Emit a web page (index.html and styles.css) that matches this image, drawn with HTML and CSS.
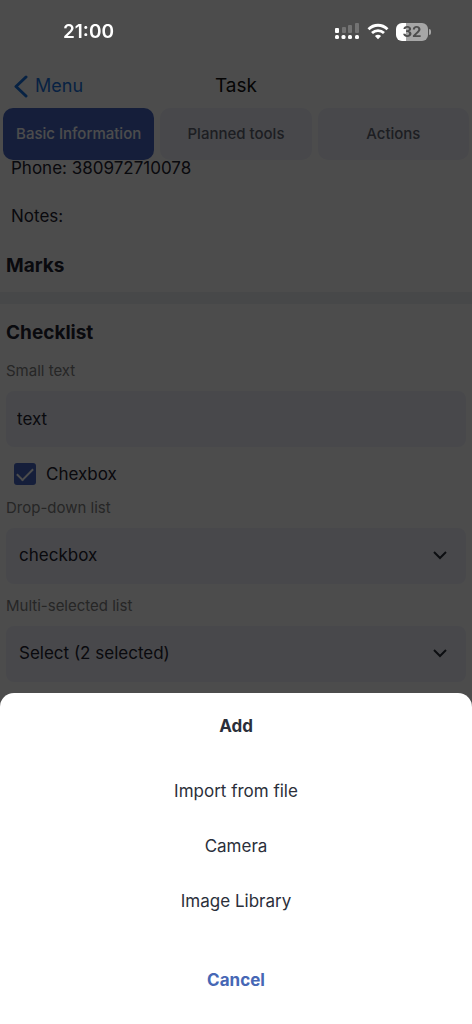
FILE: index.html
```html
<!DOCTYPE html>
<html lang="en">
<head>
<meta charset="UTF-8">
<meta name="viewport" content="width=device-width, initial-scale=1">
<title>Task</title>
<link rel="stylesheet" href="styles.css">
</head>
<body>

<!-- Status bar -->
<div class="status-bar">
  <span class="time">21:00</span>
  <div class="status-icons">
    <svg width="26" height="18" viewBox="0 0 26 18" fill="#fff">
      <rect x="1" y="5" width="4" height="5" rx="1"/>
      <g opacity=".22">
        <rect x="8" y="4" width="4" height="6" rx="1"/>
        <rect x="14" y="2" width="4" height="8" rx="1"/>
        <rect x="21" y="0" width="4" height="10" rx="1"/>
      </g>
      <rect x="1" y="12" width="4" height="4" rx="1.5"/>
      <rect x="7.5" y="12" width="4" height="4" rx="1.5"/>
      <rect x="14" y="12" width="4" height="4" rx="1.5"/>
      <rect x="21" y="12" width="4" height="4" rx="1.5"/>
    </svg>
    <svg width="22" height="18" viewBox="0 0 22 18" fill="none" stroke="#fff" stroke-width="2.8">
      <path d="M1.500 6.200C7 .9 15 .9 20.500 6.200"/>
      <path d="M5 10C8.500 6.700 13.500 6.700 17 10"/>
      <path d="M11 16.200L7.900 13.100C9.700 11.400 12.300 11.400 14.100 13.100Z" fill="#fff" stroke="none"/>
    </svg>
    <div class="battery"><span class="battery-level">32</span></div>
  </div>
</div>

<header class="nav-bar">
  <a class="back" href="#">
    <svg width="14" height="24" viewBox="0 0 14 24" fill="none" stroke="currentColor" stroke-width="3" stroke-linecap="round" stroke-linejoin="round"><path d="M12 3L2 12.500L12 22"/></svg>
    Menu
  </a>
  <h1>Task</h1>
</header>

<nav class="tabs">
  <button class="tab active">Basic Information</button>
  <button class="tab">Planned tools</button>
  <button class="tab">Actions</button>
</nav>

<main>
  <section class="details">
    <p>Phone: 380972710078</p>
    <p>Notes:</p>
    <h2>Marks</h2>
  </section>

  <section class="checklist">
    <h2>Checklist</h2>
    <label class="label" for="small-text">Small text</label>
    <input class="field" type="text" id="small-text" value="text">

    <label class="check-row">
      <input type="checkbox" checked>
      Chexbox
    </label>

    <label class="label" for="dropdown">Drop-down list</label>
    <div class="select-wrap">
      <select class="field" id="dropdown"><option>checkbox</option></select>
      <svg class="chevron" width="14" height="10" viewBox="0 0 14 10" fill="none" stroke="#2b2f3a" stroke-width="2"><path d="M1 2L7 8L13 2"/></svg>
    </div>

    <label class="label" for="multi">Multi-selected list</label>
    <div class="select-wrap">
      <select class="field" id="multi"><option>Select (2 selected)</option></select>
      <svg class="chevron" width="14" height="10" viewBox="0 0 14 10" fill="none" stroke="#2b2f3a" stroke-width="2"><path d="M1 2L7 8L13 2"/></svg>
    </div>
  </section>
</main>

<div class="overlay"></div>

<!-- Action sheet -->
<div class="sheet" role="dialog" aria-labelledby="sheet-title">
  <h3 id="sheet-title">Add</h3>
  <div class="sheet-options">
    <button>Import from file</button>
    <button>Camera</button>
    <button>Image Library</button>
  </div>
  <button class="cancel">Cancel</button>
</div>

</body>
</html>
```
FILE: styles.css
```css
* {
  box-sizing: border-box;
}
body {
  margin: 0;
  min-height: 100vh;
  background: #fff;
  color: #1f2330;
  font-family: Inter, "Liberation Sans", sans-serif;
  font-size: 17px;
  line-height: 24px;
  overflow: hidden;
}
h1, h2, h3, p {
  margin: 0;
}
button, input, select {
  font: inherit;
  color: inherit;
  border: none;
}

/* Status bar stays bright above the overlay */
.status-bar {
  position: relative;
  z-index: 3;
  display: flex;
  justify-content: space-between;
  align-items: center;
  height: 64px;
  padding: 0 44px 0 63px;
  color: #fff;
}
.time {
  font-size: 19px;
  font-weight: 600;
}
.status-icons {
  display: flex;
  align-items: center;
  gap: 7px;
}
.battery {
  position: relative;
  width: 32px;
  height: 18px;
  border-radius: 6px;
  background: linear-gradient(to right, #fff 32%, #a6a6a6 32%);
  color: #4d4d4d;
  font-size: 15px;
  font-weight: 700;
  line-height: 18px;
  text-align: center;
}
.battery::after {
  content: "";
  position: absolute;
  left: 33px;
  top: 6px;
  width: 2px;
  height: 6px;
  border-radius: 0 2px 2px 0;
  background: #a6a6a6;
}

.nav-bar {
  display: grid;
  grid-template-columns: 1fr auto 1fr;
  align-items: center;
  height: 44px;
  padding: 0 14px;
}
.nav-bar h1 {
  font-size: 19px;
  font-weight: 400;
  color: #111;
}
.back {
  display: flex;
  align-items: center;
  gap: 7px;
  color: #1a73e0;
  font-size: 18px;
  text-decoration: none;
}

.tabs {
  position: relative;
  z-index: 1;
  display: grid;
  grid-template-columns: repeat(3, 1fr);
  gap: 6px;
  padding: 0 3px;
}
.tab {
  height: 52px;
  padding: 0;
  border-radius: 10px;
  background: #f0f2fb;
  color: #626673;
  font-size: 15px;
  font-weight: 500;
}
.tab.active {
  background: #4667c4;
  color: #fff;
}

/* Content is scrolled slightly under the tabs */
main {
  margin-top: -4px;
}
.details {
  padding-bottom: 12px;
  border-bottom: 12px solid #eff1f6;
}
.details p {
  padding: 0 11px;
  margin-bottom: 24px;
}
h2 {
  padding: 0 6px;
  font-size: 19px;
  font-weight: 700;
  line-height: 28px;
}
.checklist {
  padding-top: 15px;
}
.label {
  display: block;
  margin: 12px 6px 10px;
  color: #808080;
  font-size: 15px;
  line-height: 20px;
}
.checklist h2 {
  margin-bottom: 14px;
}
.field {
  display: block;
  width: 100%;
  height: 56px;
  padding: 0 11px 2px;
  border-radius: 8px;
  background: #f0f2fb;
  appearance: none;
}
input.field {
  width: calc(100% - 12px);
  margin: 0 6px;
  padding-bottom: 0;
}
.select-wrap {
  position: relative;
  margin: 0 6px;
}
.select-wrap .field {
  padding: 0 13px 2px;
}
.chevron {
  position: absolute;
  right: 19px;
  top: 22px;
  pointer-events: none;
}
.check-row {
  display: flex;
  align-items: center;
  gap: 10px;
  margin: 15px 14px 0;
}
.check-row input {
  width: 22px;
  height: 22px;
  margin: 0;
  border-radius: 3px;
  background: #4667c4;
  appearance: none;
  display: grid;
  place-items: center;
}
.check-row input:checked::before {
  content: "";
  width: 14px;
  height: 7px;
  margin-bottom: 4px;
  border-left: 2px solid #fff;
  border-bottom: 2px solid #fff;
  transform: rotate(-45deg);
}

.overlay {
  position: fixed;
  inset: 0;
  z-index: 2;
  background: rgba(0, 0, 0, 0.7);
}

.sheet {
  position: fixed;
  left: 0;
  right: 0;
  bottom: 0;
  z-index: 4;
  display: flex;
  flex-direction: column;
  padding: 21px 0 17px;
  border-radius: 14px 14px 0 0;
  background: #fff;
  color: #2b2f3a;
  text-align: center;
}
.sheet h3 {
  font-size: 17px;
  font-weight: 700;
}
.sheet-options {
  display: flex;
  flex-direction: column;
  margin: 25px 0 24px;
}
.sheet button {
  height: 55px;
  padding: 0;
  background: none;
}
.sheet .cancel {
  color: #4667b5;
  font-weight: 700;
}
```
